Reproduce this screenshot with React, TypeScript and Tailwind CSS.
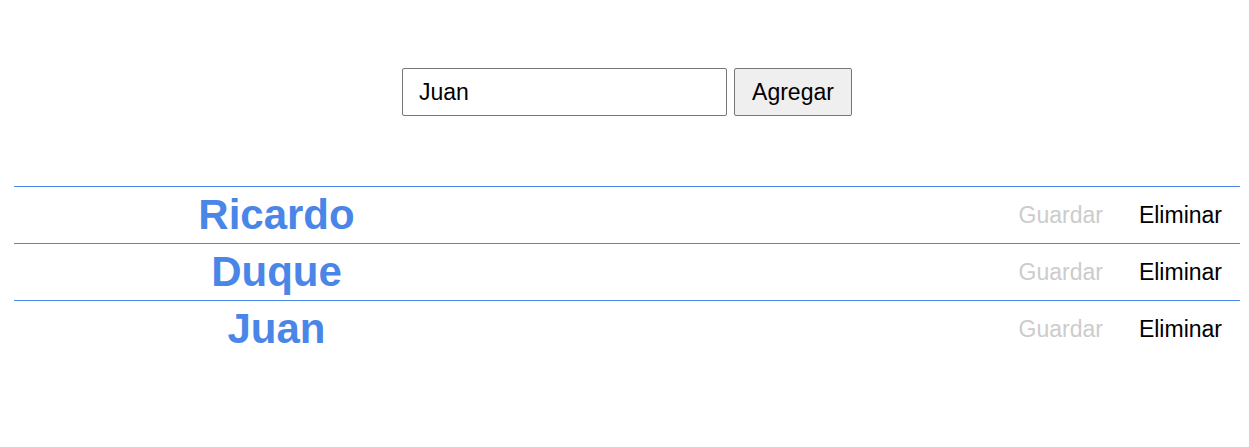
import { useState } from "react"

const INITIAL = ["Ricardo", "Duque", "Juan"]

export default function App() {
    const [names, setNames] = useState(INITIAL)
    const [draft, setDraft] = useState("Juan")

    function handleAdd() {
        const trimmed = draft.trim()
        if (!trimmed) return
        setNames([...names, trimmed])
    }

    function handleRemove(index: number) {
        setNames(names.filter((_, i) => i !== index))
    }

    return (
        <div className="min-h-[447px] bg-white font-['Liberation_Sans',Arial,sans-serif] text-black">
            {/* Add form */}
            <div className="flex justify-center gap-[7px] pt-[68px] pl-[5px]">
                <input
                    value={draft}
                    onChange={(e) => setDraft(e.target.value)}
                    onKeyDown={(e) => e.key === "Enter" && handleAdd()}
                    className="w-[325px] h-[48px] border border-[#767676] rounded-[2px] px-[16px] text-[23px] outline-none"
                />
                <button
                    onClick={handleAdd}
                    className="w-[118px] h-[48px] border border-[#767676] rounded-[2px] bg-[#efefef] text-[23px]"
                >
                    Agregar
                </button>
            </div>

            {/* Names list */}
            <ul className="mt-[70px] ml-[14px] mr-[9px]">
                {names.map((name, i) => (
                    <li key={i} className="flex items-center h-[57px] border-t border-[#4a86e8]">
                        <span className="w-[525px] text-center text-[42px] font-bold leading-none text-[#4a86e8]">
                            {name}
                        </span>
                        <span className="flex-1" />
                        <button className="px-[18px] text-[23px] text-[#cccccc]" disabled>
                            Guardar
                        </button>
                        <button onClick={() => handleRemove(i)} className="px-[18px] text-[23px]">
                            Eliminar
                        </button>
                    </li>
                ))}
            </ul>
        </div>
    )
}
